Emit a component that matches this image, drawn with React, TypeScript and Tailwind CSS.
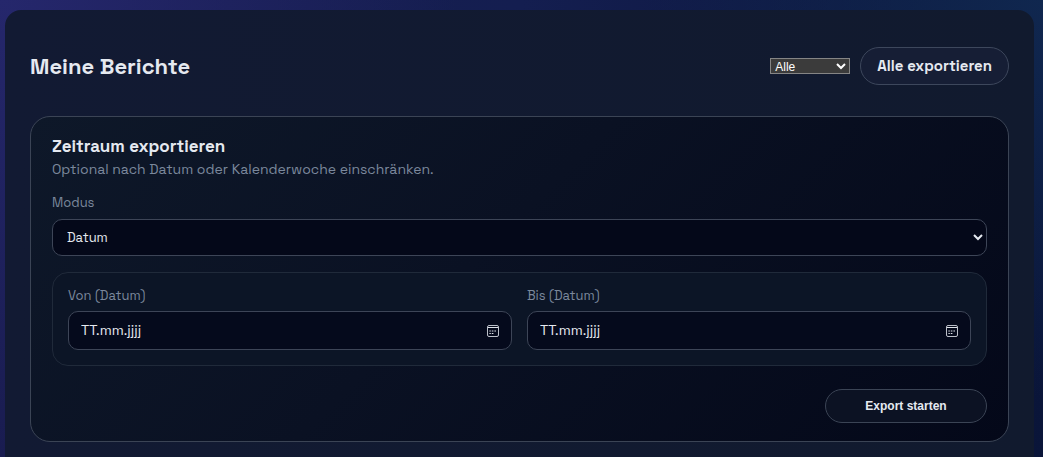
import { useState } from "react";

const inputBorder = "border border-[#3d4557]";

const CalendarIcon = () => (
  <svg width="12" height="12" viewBox="0 0 12 12" fill="none" stroke="#dde1e8" aria-hidden="true">
    <rect x="0.5" y="0.5" width="11" height="11" rx="1.5" strokeOpacity="0.85" />
    <path d="M1 2.5h10" />
    <path d="M4.8 6h1.6M7.4 6H9M2.4 6H3.8M2.4 8.5h1.4M4.8 8.5h1.6" strokeWidth="1.2" />
  </svg>
);

interface DateFieldProps {
  id: string;
  label: string;
}

const DateField = ({ id, label }: DateFieldProps) => {
  const [value, setValue] = useState("");

  return (
    <div className="flex min-w-0 flex-1 flex-col gap-[5px]">
      <label htmlFor={id} className="text-[13px] leading-5 text-[#7b889c]">
        {label}
      </label>
      <div className={`flex h-[39px] items-center rounded-[10px] bg-[#050a1c] px-3 ${inputBorder}`}>
        <input
          id={id}
          type="text"
          placeholder="TT.mm.jjjj"
          value={value}
          onChange={(e) => setValue(e.target.value)}
          className="min-w-0 flex-1 bg-transparent text-[14px] text-[#e5e9f0] outline-none placeholder:text-[#e5e9f0]"
        />
        <button type="button" aria-label={`${label} auswählen`} className="shrink-0">
          <CalendarIcon />
        </button>
      </div>
    </div>
  );
};

export default function App() {
  const [filter, setFilter] = useState("alle");
  const [mode, setMode] = useState("datum");

  return (
    <div className="min-h-screen bg-[radial-gradient(circle_at_0%_0%,#25276c_0%,transparent_40%),radial-gradient(circle_at_100%_0%,#10274f_0%,transparent_35%),linear-gradient(90deg,#191c50_0%,#141e50_50%,#0a1539_100%)] pt-2.5 pr-[9px] pl-[5px] font-['Space_Grotesk',Inter,sans-serif]">
      <main className="min-h-[calc(100vh-10px)] rounded-t-2xl bg-[linear-gradient(90deg,#121a33,#111a2e)] px-[25px] pt-[37px] pb-4">
        <header className="mb-[31px] flex items-center justify-between gap-4">
          <h1 className="text-[22px] leading-8 font-bold text-[#e5e9f0]">Meine Berichte</h1>
          <div className="flex items-center gap-2.5">
            <select
              aria-label="Berichte filtern"
              value={filter}
              onChange={(e) => setFilter(e.target.value)}
              className="h-4 w-20 border border-[#858585] bg-[#3b3b3b] font-['Liberation_Sans',sans-serif] text-xs leading-[14px] text-white"
            >
              <option value="alle">Alle</option>
              <option value="offen">Offen</option>
            </select>
            <button
              type="button"
              className="h-[38px] rounded-full border border-[#3d475c] bg-[#161e35] px-4 text-[15px] font-semibold text-[#e5e9f0]"
            >
              Alle exportieren
            </button>
          </div>
        </header>

        <section className="rounded-[20px] border border-[#3b4455] bg-[linear-gradient(135deg,#0e1829_0%,#0a1123_45%,#040819_100%)] px-[21px] pt-[17px] pb-[18px]">
          <h2 className="text-[17px] leading-6 font-bold text-[#e5e9f0]">Zeitraum exportieren</h2>
          <p className="text-[14px] leading-[22px] text-[#7b889c]">
            Optional nach Datum oder Kalenderwoche einschränken.
          </p>

          <div className="mt-[13px] flex flex-col gap-1.5">
            <label htmlFor="modus" className="text-[13px] leading-5 text-[#7b889c]">
              Modus
            </label>
            <select
              id="modus"
              value={mode}
              onChange={(e) => setMode(e.target.value)}
              className={`h-[37px] w-full rounded-[10px] bg-[#040819] pl-2.5 text-[13px] text-[#e5e9f0] ${inputBorder}`}
            >
              <option value="datum">Datum</option>
              <option value="kw">Kalenderwoche</option>
            </select>
          </div>

          <div className="mt-4 flex gap-[15px] rounded-2xl border border-[#202a3a] bg-[#0c1526] px-[15px] pt-[13px] pb-[15px]">
            <DateField id="von" label="Von (Datum)" />
            <DateField id="bis" label="Bis (Datum)" />
          </div>

          <div className="mt-[23px] flex justify-end">
            <button
              type="button"
              className="h-[34px] w-[162px] rounded-full border border-[#3b4455] bg-[#0c1223] font-['Liberation_Sans',sans-serif] text-xs font-bold text-[#e5e9f0]"
            >
              Export starten
            </button>
          </div>
        </section>
      </main>
    </div>
  );
}
